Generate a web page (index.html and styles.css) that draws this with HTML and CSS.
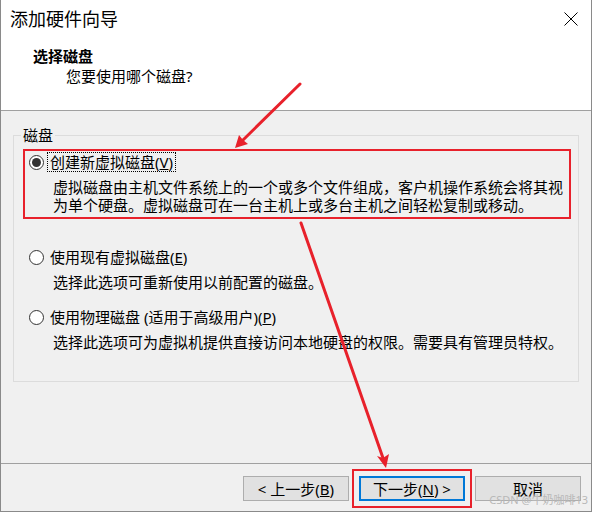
FILE: index.html
```html
<!DOCTYPE html>
<html lang="zh-CN">
<head>
<meta charset="utf-8">
<title>添加硬件向导</title>
<link rel="stylesheet" href="styles.css">
</head>
<body>
<div class="window">
  <header class="header">
    <div class="titlebar">
      <span class="title">添加硬件向导</span>
      <svg class="close" width="14" height="14" viewBox="0 0 14 14"><path d="M0.5 0.5L13.5 13.5M13.5 0.5L0.5 13.5" stroke="#000" stroke-width="1" fill="none"/></svg>
    </div>
    <div class="heading">选择磁盘</div>
    <div class="subheading">您要使用哪个磁盘?</div>
  </header>
  <main class="body">
    <fieldset class="group">
      <legend>磁盘</legend>
      <div class="option highlight">
        <div class="opt-row"><span class="radio checked"></span><span class="opt-label focus">创建新虚拟磁盘(<u>V</u>)</span></div>
        <p class="opt-desc">虚拟磁盘由主机文件系统上的一个或多个文件组成，客户机操作系统会将其视<br>为单个硬盘。虚拟磁盘可在一台主机上或多台主机之间轻松复制或移动。</p>
      </div>
      <div class="option second">
        <div class="opt-row"><span class="radio"></span><span class="opt-label">使用现有虚拟磁盘(<u>E</u>)</span></div>
        <p class="opt-desc">选择此选项可重新使用以前配置的磁盘。</p>
      </div>
      <div class="option third">
        <div class="opt-row"><span class="radio"></span><span class="opt-label">使用物理磁盘 (适用于高级用户)(<u>P</u>)</span></div>
        <p class="opt-desc">选择此选项可为虚拟机提供直接访问本地硬盘的权限。需要具有管理员特权。</p>
      </div>
    </fieldset>
  </main>
  <footer class="footer">
    <button class="btn">&lt; 上一步(<u>B</u>)</button>
    <button class="btn primary">下一步(<u>N</u>) &gt;</button>
    <button class="btn">取消</button>
  </footer>
  <div class="watermark">CSDN @牛奶咖啡13</div>
</div>
<svg class="annot" width="592" height="512" viewBox="0 0 592 512">
  <line x1="300" y1="84" x2="241" y2="142" stroke="#e8212b" stroke-width="3" stroke-linecap="round"/>
  <polygon points="235,148 239,135 243,140 248,144" fill="#e8212b"/>
  <line x1="301" y1="223" x2="383" y2="458" stroke="#e8212b" stroke-width="3" stroke-linecap="round"/>
  <polygon points="386,468 377,456 383,458 389,454" fill="#e8212b"/>
</svg>
</body>
</html>
```

FILE: styles.css
```css
* { box-sizing: border-box; }
html, body { margin: 0; padding: 0; }
body {
  width: 592px;
  height: 512px;
  background: #fff;
  font-family: "Noto Sans", "Noto Sans CJK SC", sans-serif;
  font-size: 15px;
  color: #000;
  overflow: hidden;
}
.window {
  position: relative;
  width: 592px;
  height: 512px;
  border: 1px solid #8a8a8a;
  border-top: none;
  display: flex;
  flex-direction: column;
  background: #f0f0f0;
}
.header {
  height: 111px;
  background: #fff;
  border-bottom: 1px solid #a0a0a0;
  flex: none;
}
.titlebar {
  height: 38px;
  display: flex;
  align-items: center;
  justify-content: space-between;
  padding: 0 13px 0 9px;
}
.title {
  font-size: 18px;
  line-height: 24px;
}
.close { display: block; }
.heading {
  margin-top: 8px;
  padding-left: 32px;
  font-weight: bold;
  line-height: 20px;
}
.subheading {
  padding-left: 65px;
  line-height: 20px;
}
.body {
  height: 353px;
  flex: none;
  border-bottom: 1px solid #a0a0a0;
  padding: 13px 0 0 12px;
}
.group {
  margin: 0;
  width: 566px;
  border: 1px solid #dcdcdc;
  padding: 4px 7px 25px 9px;
}
.group legend {
  padding: 0 2px;
  margin-left: -2px;
  line-height: 22px;
}
.option {
  border: 2px solid transparent;
  padding: 1px 0 3px 4px;
}
.option.highlight { border-color: #e8212b; margin-top: -1px; }
.option.second { margin-top: 25px; }
.option.third { margin-top: 8px; }
.opt-row {
  height: 20px;
  display: flex;
  align-items: center;
}
.radio {
  width: 15px;
  height: 15px;
  border: 1px solid #333;
  border-radius: 50%;
  background: #fff;
  display: flex;
  align-items: center;
  justify-content: center;
  flex: none;
}
.radio.checked::after {
  content: "";
  width: 9px;
  height: 9px;
  border-radius: 50%;
  background: #333;
}
.opt-label {
  margin-left: 4px;
  padding: 0 2px;
  line-height: 18px;
}
.opt-label.focus { outline: 1px dotted #000; }
.opt-desc {
  margin: 6px 0 0 24px;
  line-height: 18px;
}
.footer {
  flex: 1;
  display: flex;
  justify-content: flex-end;
  align-items: flex-start;
  gap: 10px;
  padding: 12px 10px 0 0;
}
.btn {
  width: 106px;
  height: 25px;
  border: 1px solid #adadad;
  background: #e1e1e1;
  font-family: "Noto Sans", "Noto Sans CJK SC", sans-serif;
  font-size: 15px;
  line-height: 20px;
  color: #000;
  padding: 0;
  margin: 0;
}
.btn.primary {
  border: 2px solid #0078d7;
  outline: 2px solid #e8212b;
  outline-offset: 5px;
}
.watermark {
  position: absolute;
  right: 3px;
  bottom: 5px;
  font-size: 11px;
  line-height: 12px;
  color: #b8b8b8;
}
.annot {
  position: absolute;
  top: 0;
  left: 0;
  pointer-events: none;
}
```
